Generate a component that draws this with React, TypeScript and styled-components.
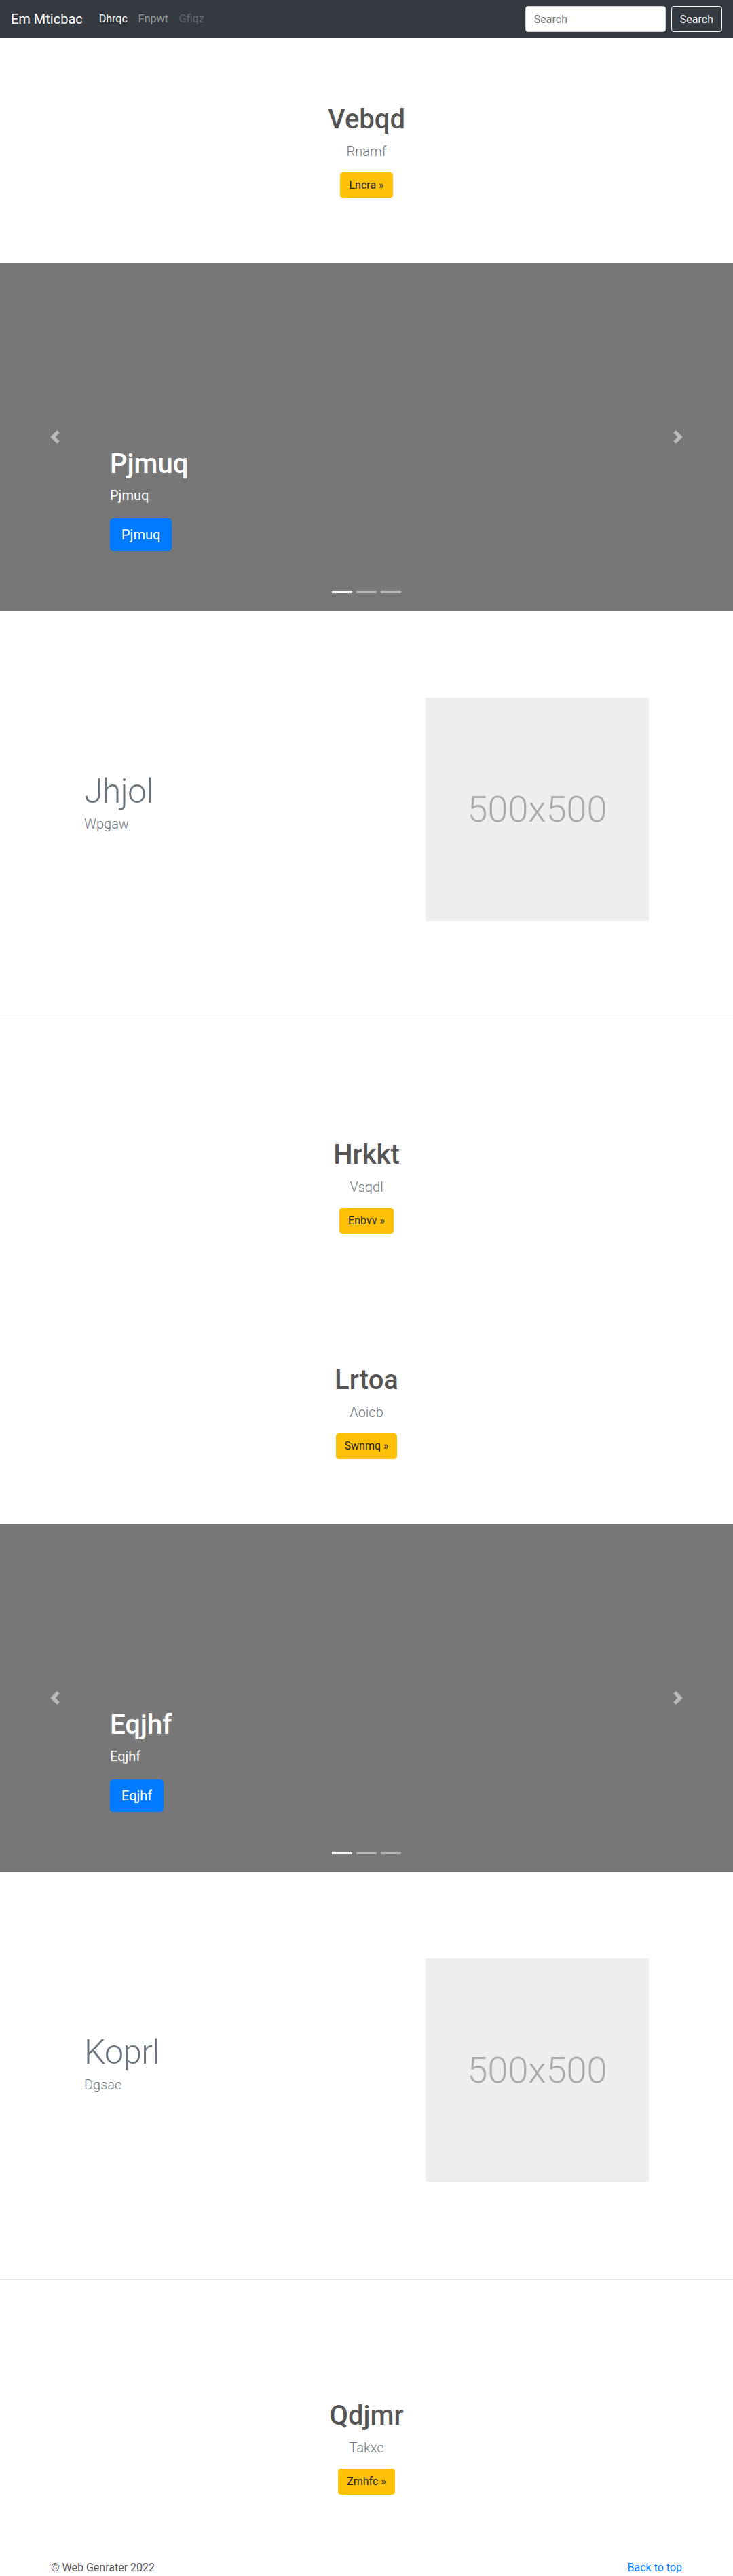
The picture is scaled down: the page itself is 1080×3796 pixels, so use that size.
import React from 'react';
import styled, { createGlobalStyle } from 'styled-components';

const GlobalStyle = createGlobalStyle`
  html, body {
    margin: 0;
    overflow: hidden;
  }

  body {
    font-family: Roboto, "Liberation Sans", sans-serif;
    font-size: 16px;
    line-height: 1.5;
    color: #5a5a5a;
    background: #fff;
  }

  * {
    box-sizing: border-box;
  }
`;

const Nav = styled.nav`
  display: flex;
  align-items: center;
  height: 56px;
  padding: 8px 16px;
  background-color: #343a40;
`;

const Brand = styled.a`
  margin-right: 16px;
  padding: 5px 0;
  font-size: 20px;
  line-height: 1.5;
  color: #fff;
  text-decoration: none;
`;

const NavLinks = styled.div`
  display: flex;
`;

const NavLink = styled.a<{ state?: 'active' | 'disabled' }>`
  padding: 8px;
  color: ${(p) =>
    p.state === 'active'
      ? '#fff'
      : p.state === 'disabled'
      ? 'rgba(255, 255, 255, 0.25)'
      : 'rgba(255, 255, 255, 0.5)'};
  text-decoration: none;
`;

const SearchForm = styled.form`
  display: flex;
  gap: 8px;
  margin-left: auto;
`;

const SearchInput = styled.input`
  width: 207px;
  height: 38px;
  padding: 6px 12px;
  font-family: inherit;
  font-size: 16px;
  color: #495057;
  border: 1px solid #ced4da;
  border-radius: 4px;

  ::placeholder {
    color: #6c757d;
  }
`;

const SearchButton = styled.button`
  height: 38px;
  padding: 6px 12px;
  font-family: inherit;
  font-size: 16px;
  color: #f8f9fa;
  background: transparent;
  border: 1px solid #f8f9fa;
  border-radius: 4px;
`;

const Hero = styled.section`
  padding: 96px 0;
  text-align: center;
`;

const HeroTitle = styled.h1`
  margin: 0 0 8px;
  font-size: 40px;
  font-weight: 500;
  line-height: 1.2;
  color: #555;
`;

const Lead = styled.p`
  margin: 0 0 16px;
  font-size: 20px;
  font-weight: 300;
  line-height: 1.5;
  color: #6c757d;
`;

const WarningButton = styled.a`
  display: inline-block;
  padding: 6px 12px;
  font-size: 16px;
  line-height: 24px;
  color: #212529;
  background-color: #ffc107;
  border: 1px solid #ffc107;
  border-radius: 4px;
  text-decoration: none;
`;

const Carousel = styled.div`
  position: relative;
  height: 512px;
  background-color: #777;
  overflow: hidden;
`;

const Slide = styled.div`
  display: flex;
  flex-direction: column;
  justify-content: flex-end;
  height: 100%;
  padding: 0 15% 88px;
  color: #fff;
`;

const CaptionTitle = styled.h1`
  margin: 0 0 8px;
  font-size: 40px;
  font-weight: 500;
  line-height: 1.2;
`;

const CaptionText = styled.p`
  margin: 0 0 20px;
  font-size: 20px;
  line-height: 1.4;
`;

const PrimaryButton = styled.a`
  align-self: flex-start;
  padding: 8px 16px;
  font-size: 20px;
  line-height: 30px;
  color: #fff;
  background-color: #007bff;
  border: 1px solid #007bff;
  border-radius: 4.8px;
  text-decoration: none;
`;

const Control = styled.a<{ side: 'left' | 'right' }>`
  position: absolute;
  top: 0;
  bottom: 0;
  ${(p) => p.side}: 0;
  display: flex;
  align-items: center;
  justify-content: center;
  width: 15%;
  opacity: 0.5;

  svg {
    width: 20px;
    height: 20px;
  }
`;

const Indicators = styled.div`
  position: absolute;
  left: 0;
  right: 0;
  bottom: 26px;
  display: flex;
  justify-content: center;
  gap: 6px;
`;

const Indicator = styled.span<{ active?: boolean }>`
  width: 30px;
  height: 3px;
  background-color: #fff;
  opacity: ${(p) => (p.active ? 1 : 0.5)};
`;

const Featurette = styled.section`
  display: grid;
  grid-template-columns: 1fr 329px;
  align-items: center;
  padding: 128px 124px 64px;
`;

const FeaturetteHeading = styled.h2`
  margin: 0 0 8px;
  font-size: 50px;
  font-weight: 300;
  line-height: 1;
  letter-spacing: -0.8px;
  color: #6c757d;
`;

const Placeholder = styled.div`
  display: flex;
  align-items: center;
  justify-content: center;
  width: 329px;
  height: 329px;
  font-size: 54px;
  font-weight: 300;
  color: #aaa;
  background-color: #eee;
`;

const Divider = styled.hr`
  margin: 80px 0;
  border: 0;
  border-top: 1px solid rgba(0, 0, 0, 0.1);
`;

const Footer = styled.footer`
  display: flex;
  justify-content: space-between;
  padding: 0 75px;
  line-height: 24px;
`;

const FooterLink = styled.a`
  color: #007bff;
  text-decoration: none;
`;

const ChevronLeft = () => (
  <svg viewBox="0 0 8 8" fill="#fff">
    <path d="M5.25 0l-4 4 4 4 1.5-1.5L4.25 4l2.5-2.5L5.25 0z" />
  </svg>
);

const ChevronRight = () => (
  <svg viewBox="0 0 8 8" fill="#fff">
    <path d="M2.75 0l-1.5 1.5L3.75 4l-2.5 2.5L2.75 8l4-4-4-4z" />
  </svg>
);

const HeroBlock: React.FC<{ title: string; lead: string; action: string }> = ({
  title,
  lead,
  action,
}) => (
  <Hero>
    <HeroTitle>{title}</HeroTitle>
    <Lead>{lead}</Lead>
    <WarningButton href="#">{action} »</WarningButton>
  </Hero>
);

const CarouselBlock: React.FC<{ title: string }> = ({ title }) => (
  <Carousel>
    <Slide>
      <CaptionTitle>{title}</CaptionTitle>
      <CaptionText>{title}</CaptionText>
      <PrimaryButton href="#">{title}</PrimaryButton>
    </Slide>
    <Control side="left" href="#">
      <ChevronLeft />
    </Control>
    <Control side="right" href="#">
      <ChevronRight />
    </Control>
    <Indicators>
      {[0, 1, 2].map((i) => (
        <Indicator key={i} active={i === 0} />
      ))}
    </Indicators>
  </Carousel>
);

const FeaturetteBlock: React.FC<{ title: string; lead: string }> = ({ title, lead }) => (
  <Featurette>
    <div>
      <FeaturetteHeading>{title}</FeaturetteHeading>
      <Lead>{lead}</Lead>
    </div>
    <Placeholder>500x500</Placeholder>
  </Featurette>
);

const App: React.FC = () => (
  <>
    <GlobalStyle />
    <Nav>
      <Brand href="#">Em Mticbac</Brand>
      <NavLinks>
        <NavLink state="active" href="#">
          Dhrqc
        </NavLink>
        <NavLink href="#">Fnpwt</NavLink>
        <NavLink state="disabled" href="#">
          Gfiqz
        </NavLink>
      </NavLinks>
      <SearchForm onSubmit={(e) => e.preventDefault()}>
        <SearchInput type="text" placeholder="Search" />
        <SearchButton type="submit">Search</SearchButton>
      </SearchForm>
    </Nav>

    <HeroBlock title="Vebqd" lead="Rnamf" action="Lncra" />
    <CarouselBlock title="Pjmuq" />
    <FeaturetteBlock title="Jhjol" lead="Wpgaw" />
    <Divider />
    <HeroBlock title="Hrkkt" lead="Vsqdl" action="Enbvv" />
    <HeroBlock title="Lrtoa" lead="Aoicb" action="Swnmq" />
    <CarouselBlock title="Eqjhf" />
    <FeaturetteBlock title="Koprl" lead="Dgsae" />
    <Divider />
    <HeroBlock title="Qdjmr" lead="Takxe" action="Zmhfc" />

    <Footer>
      <span>© Web Genrater 2022</span>
      <FooterLink href="#">Back to top</FooterLink>
    </Footer>
  </>
);

export default App;
